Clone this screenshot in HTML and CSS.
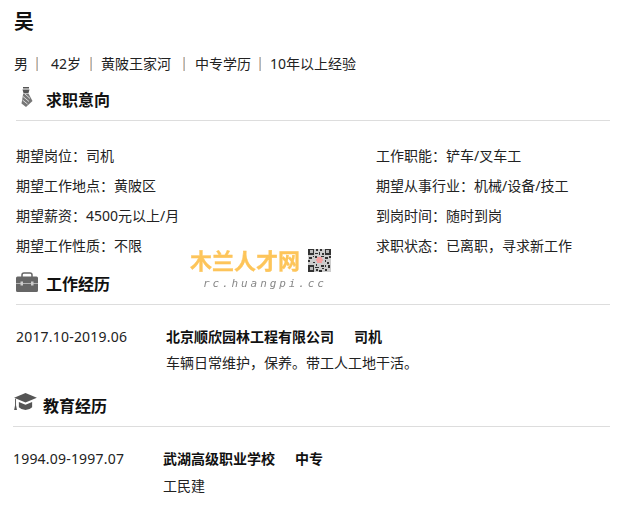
FILE: index.html
```html
<!DOCTYPE html>
<html lang="zh">
<head>
<meta charset="utf-8">
<title>吴</title>
<link rel="stylesheet" href="styles.css">
</head>
<body>
<main class="page">
  <h1 class="name">吴</h1>
  <p class="info"><span>男</span><i class="sep s1"></i><span>42岁</span><i class="sep s2"></i><span>黄陂王家河</span><i class="sep s3"></i><span>中专学历</span><i class="sep s4"></i><span>10年以上经验</span></p>

  <section class="intent">
    <header class="head">
      <svg class="ico tie" viewBox="0 0 13 20"><path fill="#555" d="M3 0h6v1.500H3zM2.500 2.500h7l-1 3.500h-5z"/><path fill="#777" d="M3.200 6.500h5.300L12.500 14 6 20 1.500 16.500z"/><path stroke="#ddd" stroke-width="1" fill="none" d="M3 9.500l6 5M2.500 13l5 4M5 7l5 4.500"/></svg>
      <h2>求职意向</h2>
    </header>
    <div class="fields">
      <p>期望岗位：司机</p><p>工作职能：铲车/叉车工</p>
      <p>期望工作地点：黄陂区</p><p>期望从事行业：机械/设备/技工</p>
      <p>期望薪资：4500元以上/月</p><p>到岗时间：随时到岗</p>
      <p>期望工作性质：不限</p><p>求职状态：已离职，寻求新工作</p>
    </div>
  </section>

  <section class="work">
    <header class="head">
      <svg class="ico case" viewBox="0 0 22 20"><path fill="#666" d="M0 6q0-1.500 1.500-1.500h19Q22 4.500 22 6v5H0zM0 11.500h22v7q0 1.500-1.500 1.500h-19Q0 20 0 18.500z"/><path fill="none" stroke="#666" stroke-width="1.500" d="M6 5V3q0-2 2-2h6q2 0 2 2v2"/><path fill="#ccc" d="M4.500 9.500h2.500v4H4.500zM15 9.500h2.500v4H15z"/></svg>
      <h2>工作经历</h2>
    </header>
    <div class="entry">
      <div class="date">2017.10-2019.06</div>
      <div>
        <p class="title"><b>北京顺欣园林工程有限公司</b><b>司机</b></p>
        <p class="desc">车辆日常维护，保养。带工人工地干活。</p>
      </div>
    </div>
  </section>

  <section class="edu">
    <header class="head">
      <svg class="ico cap" viewBox="0 0 24 19"><path fill="#555" d="M12 0l12 5-12 5L0 5z"/><path fill="#555" d="M5 9.500l7 3 7-3V15q-3 3-7 3t-7-3z"/><path fill="#555" d="M1 6h1v7l1 5H0l1-5z"/></svg>
      <h2>教育经历</h2>
    </header>
    <div class="entry">
      <div class="date">1994.09-1997.07</div>
      <div>
        <p class="title"><b>武湖高级职业学校</b><b>中专</b></p>
        <p class="desc">工民建</p>
      </div>
    </div>
  </section>
</main>

<aside class="mark">
  <div class="mark-top">
    <span class="mark-name">木兰人才网</span>
    <svg class="qr" viewBox="0 0 25 25" shape-rendering="crispEdges">
      <rect width="25" height="25" fill="#ccc"/>
      <path fill="#333" d="M0 0h7v7H0zM18 0h7v7h-7zM0 18h7v7H0zM9 1h2v2H9zM13 0h2v3h-2zM12 4h1v3h-1zM8 5h3v1H8zM15 5h2v2h-2zM8 8h2v2H8zM1 9h3v2H1zM5 8h2v1H5zM14 8h3v1h-3zM19 9h3v2h-3zM23 8h2v2h-2zM0 13h2v2H0zM3 12h3v1H3zM5 15h3v1H5zM18 13h2v2h-2zM22 12h3v1h-3zM21 15h2v2h-2zM9 17h1v2H9zM8 20h4v1H8zM12 23h3v2h-3zM14 18h3v2h-3zM18 18h2v2h-2zM22 18h2v3h-2zM18 22h3v2h-3zM9 22h2v2H9zM15 21h2v1h-2z"/>
      <path fill="#bbb" d="M2 2h3v3H2zM20 2h3v3h-3zM2 20h3v3H2z"/>
      <rect x="9" y="9" width="7" height="7" rx="3.500" fill="#f3a0a0"/>
    </svg>
  </div>
  <div class="mark-url">rc.huangpi.cc</div>
</aside>
</body>
</html>
```
FILE: styles.css
```css
* { box-sizing: border-box; }
html, body { margin: 0; padding: 0; }
body {
  position: relative;
  width: 620px;
  height: 507px;
  overflow: hidden;
  background: #fff;
  color: #222;
  font: 14px/20px "Noto Sans", "Noto Sans CJK SC", sans-serif;
}
p, h1, h2 { margin: 0; }
.page { padding: 10px 10px 0 14px; }
.name { font-size: 20px; line-height: 24px; font-weight: 700; color: #111; }
.info { display: flex; align-items: center; height: 20px; margin-top: 20px; }
.sep {
  width: 2px;
  height: 14px;
  background: linear-gradient(90deg, #e6c4a4 50%, #a9b8c8 50%);
}
.s1 { margin: 0 13px 0 8px; }
.s2 { margin: 0 9px; }
.s3 { margin: 0 10px 0 12px; }
.s4 { margin: 0 9px 0 8px; }
.head {
  display: flex;
  align-items: flex-start;
  border-bottom: 1px solid #ddd;
}
.head h2 { font-size: 16px; line-height: 22px; font-weight: 700; color: #111; }
.ico { display: block; flex: none; }
.intent { margin-left: 2px; }
.intent .head { height: 47px; }
.tie { width: 13px; height: 20px; margin: 13px 13px 0 4px; }
.intent h2 { margin-top: 15px; }
.fields {
  display: grid;
  grid-template-columns: 360px 1fr;
  grid-auto-rows: 30px;
  margin-top: 20px;
  align-items: center;
}
.work { margin-left: 2px; }
.work .head { height: 44px; }
.case { width: 22px; height: 20px; margin: 11px 8px 0 0; }
.work h2 { margin-top: 12px; }
.entry { display: flex; margin-top: 22px; }
.date { width: 150px; flex: none; letter-spacing: .2px; }
.title { display: flex; gap: 20px; color: #111; }
.title b { font-weight: 700; }
.desc { margin-top: 6px; }
.edu { margin: 15px 0 0 -1px; }
.edu .head { height: 39px; }
.edu .desc { margin-top: 7px; }
.cap { width: 23px; height: 18px; margin: 5px 6px 0 1px; }
.edu h2 { margin-top: 7px; }
.mark {
  position: absolute;
  left: 190px;
  top: 248px;
  width: 141px;
}
.mark-top { display: flex; align-items: center; justify-content: space-between; height: 24px; }
.mark-name {
  font-size: 22px;
  line-height: 24px;
  font-weight: 700;
  color: #fdc55a;
  -webkit-text-stroke: .3px #fdc55a;
  filter: blur(.3px);
}
.qr { width: 23px; height: 24px; display: block; filter: blur(.5px); }
.mark-url {
  margin: 5px 0 0 13px;
  font: italic 11px/14px "DejaVu Sans Mono", monospace;
  letter-spacing: 2.900px;
  color: #888;
  filter: blur(.3px);
  white-space: nowrap;
}
```
